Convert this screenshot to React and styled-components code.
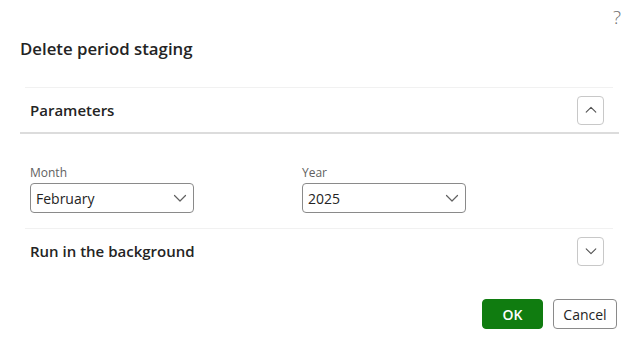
import React, {useState} from 'react';
import styled, {createGlobalStyle} from 'styled-components';

const GlobalStyle = createGlobalStyle`
  body {
    margin: 0;
    background: #ffffff;
    font-family: "Open Sans", "Noto Sans", Arial, sans-serif;
    color: #242424;
  }
`;

const Dialog = styled.div`
  width: 641px;
  height: 351px;
  box-sizing: border-box;
  padding: 0 22px 0 20px;
`;

const TopBar = styled.div`
  display: flex;
  justify-content: flex-end;
  height: 35px;
  padding-top: 5px;
  margin-right: -2px;
  box-sizing: border-box;
`;

const HelpMark = styled.span`
  font-size: 19px;
  font-weight: 300;
  line-height: 24px;
  color: #6e6e6e;
`;

const Title = styled.h1`
  margin: 0;
  font-size: 16.8px;
  font-weight: 600;
  line-height: 28px;
  color: #242424;
`;

const Section = styled.section`
  margin-top: ${p => p.$gap || 0}px;
`;

const SectionHead = styled.div`
  display: flex;
  align-items: center;
  justify-content: space-between;
  height: ${p => p.$height || 44}px;
  margin: 0 6px 0 5px;
  padding: 0 9px 0 5px;
  border-top: 1px solid #f1f1f1;
`;

const HeadRule = styled.div`
  height: 2px;
  background: #dcdcdc;
`;

const SectionTitle = styled.h2`
  margin: 0;
  font-size: 15px;
  font-weight: 600;
  color: #242424;
`;

const ToggleButton = styled.button`
  width: 27px;
  height: 29px;
  display: flex;
  align-items: center;
  justify-content: center;
  padding: 0;
  background: #ffffff;
  border: 1px solid #c8c8c8;
  border-radius: 4px;
  color: #505050;
`;

const Fields = styled.div`
  display: grid;
  grid-template-columns: 164px 164px;
  column-gap: 108px;
  padding: 31px 0 15px 10px;
`;

const Field = styled.label`
  display: flex;
  flex-direction: column;
`;

const FieldLabel = styled.span`
  font-size: 12px;
  line-height: 16px;
  color: #616161;
  margin-bottom: 2px;
`;

const SelectBox = styled.div`
  display: flex;
  align-items: center;
  justify-content: space-between;
  height: 30px;
  box-sizing: border-box;
  padding: 0 5px 0 5px;
  border: 1px solid #8a8a8a;
  border-radius: 4px;
  font-size: 14px;
  color: #242424;
`;

const ChevronSlot = styled.span`
  display: flex;
  color: #616161;
`;

const Footer = styled.div`
  display: flex;
  justify-content: flex-end;
  gap: 10px;
  margin-top: 26px;
  margin-right: 2px;
`;

const Button = styled.button`
  height: 30px;
  padding: 0;
  width: ${p => p.$width}px;
  border-radius: 4px;
  font-family: "Open Sans", "Noto Sans", Arial, sans-serif;
  font-size: 14px;
  font-weight: ${p => (p.$primary ? 600 : 400)};
  border: 1px solid ${p => (p.$primary ? '#107c10' : '#8a8a8a')};
  background: ${p => (p.$primary ? '#107c10' : '#ffffff')};
  color: ${p => (p.$primary ? '#ffffff' : '#242424')};
`;

const Chevron = ({up, size = 14}) => (
  <svg width={size} height={size} viewBox="0 0 16 16" fill="none">
    <path
      d={up ? 'M2.5 10.5 L8 5 L13.5 10.5' : 'M2.5 5.5 L8 11 L13.5 5.5'}
      stroke="currentColor"
      strokeWidth="1.2"
      strokeLinecap="round"
      strokeLinejoin="round"
    />
  </svg>
);

const Select = ({label, value}) => (
  <Field>
    <FieldLabel>{label}</FieldLabel>
    <SelectBox>
      <span>{value}</span>
      <ChevronSlot>
        <Chevron size={16} />
      </ChevronSlot>
    </SelectBox>
  </Field>
);

const App = () => {
  const [paramsOpen, setParamsOpen] = useState(true);
  const [bgOpen, setBgOpen] = useState(false);

  return (
    <Dialog>
      <GlobalStyle />
      <TopBar>
        <HelpMark>?</HelpMark>
      </TopBar>
      <Title>Delete period staging</Title>

      <Section $gap={24}>
        <SectionHead $height={44}>
          <SectionTitle>Parameters</SectionTitle>
          <ToggleButton onClick={() => setParamsOpen(!paramsOpen)}>
            <Chevron up={paramsOpen} />
          </ToggleButton>
        </SectionHead>
        <HeadRule />
        {paramsOpen && (
          <Fields>
            <Select label="Month" value="February" />
            <Select label="Year" value="2025" />
          </Fields>
        )}
      </Section>

      <Section>
        <SectionHead $height={44}>
          <SectionTitle>Run in the background</SectionTitle>
          <ToggleButton onClick={() => setBgOpen(!bgOpen)}>
            <Chevron up={bgOpen} />
          </ToggleButton>
        </SectionHead>
      </Section>

      <Footer>
        <Button $primary $width={61}>OK</Button>
        <Button $width={64}>Cancel</Button>
      </Footer>
    </Dialog>
  );
};

export default App;
